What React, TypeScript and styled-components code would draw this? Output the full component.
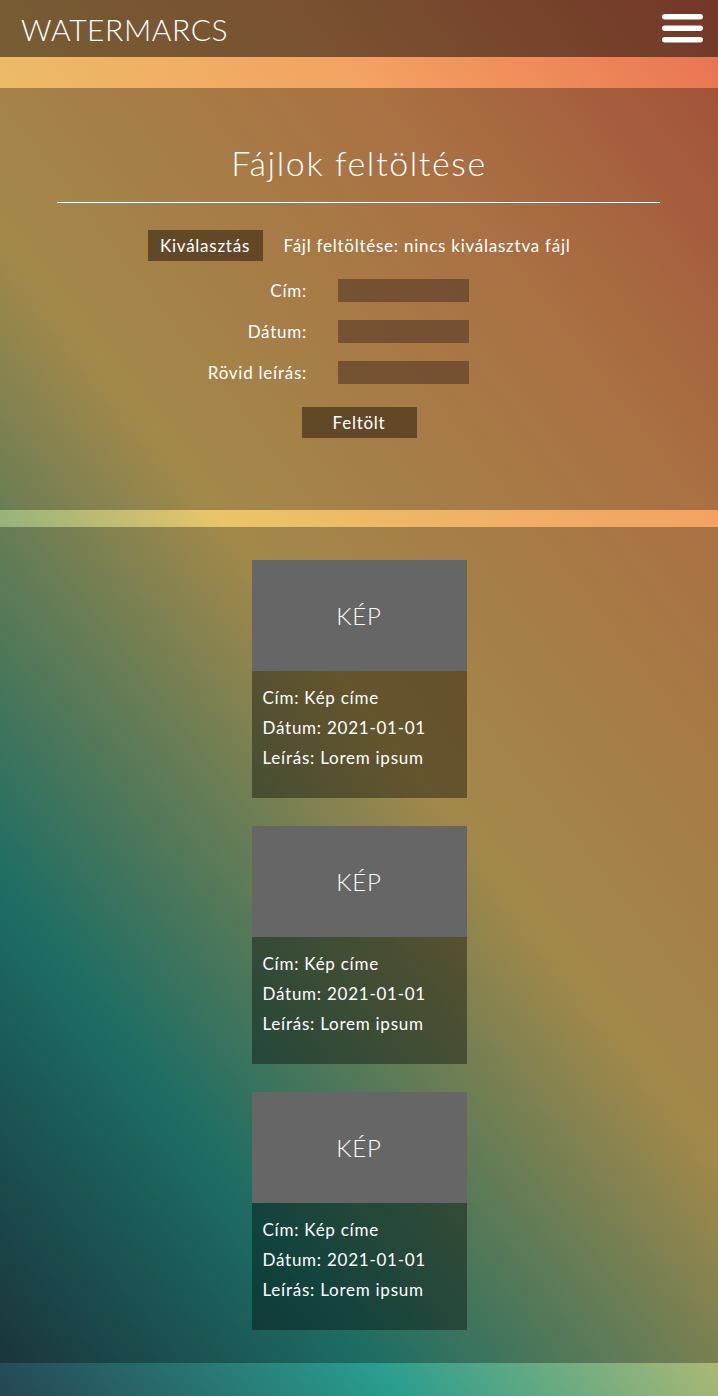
import React from "react";
import styled, { createGlobalStyle } from "styled-components";

const GlobalStyle = createGlobalStyle`
  html, body {
    margin: 0;
    padding: 0;
  }
  body {
    font-family: "Lato", "Open Sans", sans-serif;
    color: #ffffff;
  }
  * { box-sizing: border-box; }
`;

const Page = styled.div`
  min-height: 1396px;
  display: flex;
  flex-direction: column;
  background: linear-gradient(
    52deg,
    #264653 0%,
    #2a9d8f 22%,
    #e9c46a 50%,
    #f4a261 77%,
    #e76f51 100%
  );
`;

const Header = styled.header`
  height: 57px;
  display: flex;
  align-items: center;
  justify-content: space-between;
  padding: 0 15px 0 21px;
  background: rgba(0, 0, 0, 0.5);
`;

const Logo = styled.div`
  font-size: 30px;
  font-weight: 300;
  letter-spacing: 0.6px;
`;

const MenuButton = styled.button`
  border: 0;
  padding: 0;
  background: transparent;
  display: flex;
  cursor: pointer;
`;

const Strip = styled.div<{ $h: number }>`
  height: ${(p) => p.$h}px;
`;

const UploadSection = styled.section`
  height: 422px;
  padding-top: 55px;
  background: rgba(0, 0, 0, 0.3);
  display: flex;
  flex-direction: column;
  align-items: center;
  font-size: 17px;
  letter-spacing: 0.75px;
`;

const Title = styled.h1`
  margin: 0;
  font-size: 34px;
  line-height: 40px;
  font-weight: 300;
  letter-spacing: 1.6px;
`;

const Divider = styled.hr`
  align-self: stretch;
  margin: 19px 58px 0 57px;
  border: 0;
  border-top: 1px solid #ffffff;
`;

const FileRow = styled.div`
  margin-top: 27px;
  display: flex;
  align-items: center;
  gap: 21px;
`;

const DarkButton = styled.button<{ $mt?: number }>`
  width: 115px;
  height: 31px;
  margin-top: ${(p) => p.$mt ?? 0}px;
  border: 0;
  background: rgba(75, 55, 30, 0.75);
  color: #ffffff;
  font-family: inherit;
  font-size: 17px;
  font-weight: 400;
  letter-spacing: inherit;
  padding: 0;
`;

const FormGrid = styled.div`
  margin-top: 18px;
  align-self: flex-start;
  display: grid;
  grid-template-columns: 307px 131px;
  column-gap: 31px;
  row-gap: 18px;
  align-items: center;
`;

const Label = styled.label`
  text-align: right;
`;

const Field = styled.input`
  height: 23px;
  width: 131px;
  border: 0;
  background: rgba(75, 50, 35, 0.55);
  color: #ffffff;
`;

const CardsSection = styled.section`
  flex: 1;
  padding: 33px 0;
  background: rgba(0, 0, 0, 0.3);
  display: flex;
  flex-direction: column;
  align-items: center;
  gap: 28px;
`;

const Card = styled.article`
  width: 215px;
  display: flex;
  flex-direction: column;
`;

const ImageBox = styled.div`
  height: 111px;
  background: #666666;
  display: flex;
  align-items: center;
  justify-content: center;
  font-size: 24px;
  font-weight: 300;
  letter-spacing: 0.8px;
`;

const Info = styled.div`
  height: 127px;
  padding: 12px 11px 0;
  background: rgba(0, 0, 0, 0.38);
  font-size: 17px;
  line-height: 30px;
  letter-spacing: 0.75px;
`;

const Footer = styled.footer`
  height: 33px;
`;

const MenuIcon = () => (
  <svg width="41" height="29" viewBox="0 0 41 29" aria-hidden="true">
    <rect x="0" y="0" width="41" height="5.5" rx="2.75" fill="#fff" />
    <rect x="0" y="11.5" width="41" height="5.5" rx="2.75" fill="#fff" />
    <rect x="0" y="23" width="41" height="5.5" rx="2.75" fill="#fff" />
  </svg>
);

const cards = [1, 2, 3].map((id) => ({
  id,
  title: "Kép címe",
  date: "2021-01-01",
  desc: "Lorem ipsum",
}));

export default function App() {
  return (
    <>
      <GlobalStyle />
      <Page>
        <Header>
          <Logo>WATERMARCS</Logo>
          <MenuButton aria-label="Menü">
            <MenuIcon />
          </MenuButton>
        </Header>
        <Strip $h={31} />
        <UploadSection>
          <Title>Fájlok feltöltése</Title>
          <Divider />
          <FileRow>
            <DarkButton>Kiválasztás</DarkButton>
            <span>Fájl feltöltése: nincs kiválasztva fájl</span>
          </FileRow>
          <FormGrid>
            <Label>Cím:</Label>
            <Field />
            <Label>Dátum:</Label>
            <Field />
            <Label>Rövid leírás:</Label>
            <Field />
          </FormGrid>
          <DarkButton $mt={23}>Feltölt</DarkButton>
        </UploadSection>
        <Strip $h={17} />
        <CardsSection>
          {cards.map((c) => (
            <Card key={c.id}>
              <ImageBox>KÉP</ImageBox>
              <Info>
                <div>Cím: {c.title}</div>
                <div>Dátum: {c.date}</div>
                <div>Leírás: {c.desc}</div>
              </Info>
            </Card>
          ))}
        </CardsSection>
        <Footer />
      </Page>
    </>
  );
}
